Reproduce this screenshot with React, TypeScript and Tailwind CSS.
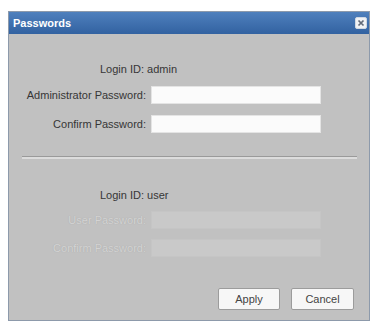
import React from "react";

const font = { fontFamily: '"Liberation Sans", Arial, sans-serif' };

function Row({ label, disabled }: { label: string; disabled?: boolean }) {
  return (
    <div className="flex items-center h-[18px]">
      <div
        className={
          "w-[138px] text-right text-[11px] leading-[13px] pr-[1px] " +
          (disabled ? "text-[#d4d4d4] [text-shadow:0_0_1px_#a4a4a4]" : "text-[#363636]")
        }
      >
        {label}
      </div>
      <div
        className={
          "ml-[4px] w-[170px] h-[18px] " +
          (disabled
            ? "bg-[#c9c9c9] border border-[#c5c5c5]"
            : "bg-[#fbfbfb] border border-[#e4e4e4]")
        }
      />
    </div>
  );
}

export default function App() {
  return (
    <div className="w-[375px] h-[323px] bg-white pt-[11px] pl-[8px]" style={font}>
      <div className="w-[362px] h-[310px] flex flex-col border border-[#8d9aab] bg-[#c1c1c1]">
        <div className="h-[22px] flex items-center justify-between pl-[4px] pr-[2px] bg-gradient-to-b from-[#4f80bd] to-[#3262a1]">
          <span className="text-white font-bold text-[11px] leading-[13px]">Passwords</span>
          <div className="w-[12px] h-[12px] rounded-[2px] bg-[#f0f2f5] border border-[#d0d8e2] flex items-center justify-center">
            <svg width="8" height="8" viewBox="0 0 8 8">
              <path d="M1.5 1.5 L6.5 6.5 M6.5 1.5 L1.5 6.5" stroke="#626a78" strokeWidth="1.7" />
            </svg>
          </div>
        </div>
        <div className="flex-1 flex flex-col">
          <div className="pt-[29px] pl-[91px] text-[11px] leading-[13px] text-[#363636]">Login ID: admin</div>
          <div className="mt-[10px] flex flex-col gap-[11px]">
            <Row label="Administrator Password:" />
            <Row label="Confirm Password:" />
          </div>
          <div className="mt-[23px] mx-[13px] mr-[12px] border-t border-[#9a9a9a] border-b-2 border-b-[#dcdcdc]" />
          <div className="mt-[30px] pl-[91px] text-[11px] leading-[13px] text-[#363636]">Login ID: user</div>
          <div className="mt-[9px] flex flex-col gap-[10px]">
            <Row label="User Password:" disabled />
            <Row label="Confirm Password:" disabled />
          </div>
          <div className="mt-auto mb-[10px] flex justify-end gap-[11px] pr-[15px]">
            <button className="w-[62px] h-[22px] bg-[#f7f7f7] border border-[#9c9c9c] rounded-[2px] text-[11px] text-[#444444]">
              Apply
            </button>
            <button className="w-[63px] h-[22px] bg-[#f7f7f7] border border-[#9c9c9c] rounded-[2px] text-[11px] text-[#444444]">
              Cancel
            </button>
          </div>
        </div>
      </div>
    </div>
  );
}
